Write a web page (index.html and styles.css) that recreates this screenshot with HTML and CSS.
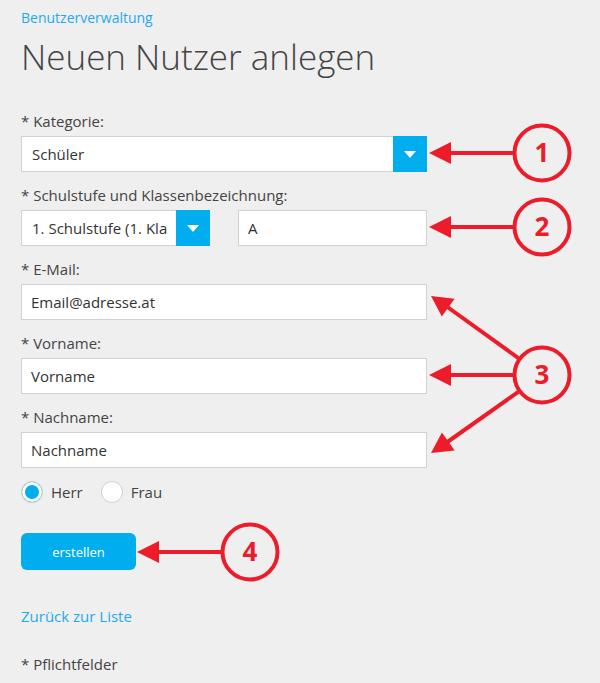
FILE: index.html
```html
<!DOCTYPE html>
<html lang="de">
  <head>
    <meta charset="UTF-8" />
    <title>Neuen Nutzer anlegen</title>
    <link rel="stylesheet" href="styles.css">
  </head>
  <body>
    <div id="page">
      <a class="crumb" href="#">Benutzerverwaltung</a>
      <h1>Neuen Nutzer anlegen</h1>

      <form class="user-form">
        <label>* Kategorie:</label>
        <div class="select">
          <span class="select-text">Schüler</span>
          <span class="select-btn"></span>
        </div>

        <label>* Schulstufe und Klassenbezeichnung:</label>
        <div class="row">
          <div class="select half">
            <span class="select-text">1. Schulstufe (1. Klasse)</span>
            <span class="select-btn"></span>
          </div>
          <input type="text" class="half" value="A" />
        </div>

        <label>* E-Mail:</label>
        <input type="text" value="Email@adresse.at" />

        <label>* Vorname:</label>
        <input type="text" value="Vorname" />

        <label>* Nachname:</label>
        <input type="text" value="Nachname" />

        <div class="radios">
          <span class="radio checked"></span><span class="radio-label">Herr</span>
          <span class="radio"></span><span class="radio-label">Frau</span>
        </div>

        <button type="button" class="btn">erstellen</button>
      </form>

      <a class="back" href="#">Zurück zur Liste</a>
      <p class="note">* Pflichtfelder</p>
    </div>

    <!-- annotations drawn over the screenshot -->
    <svg id="marks" width="600" height="683" viewBox="0 0 600 683">
      <g class="ring">
        <circle cx="542" cy="153" r="27.5" />
        <circle cx="542" cy="227" r="27.5" />
        <circle cx="542" cy="375" r="27.5" />
        <circle cx="250" cy="552" r="27.5" />
      </g>
      <g class="shaft">
        <line x1="514" y1="153" x2="446" y2="153" />
        <line x1="514" y1="227" x2="446" y2="227" />
        <line x1="514" y1="375" x2="446" y2="375" />
        <line x1="518.4" y1="358.1" x2="446" y2="306" />
        <line x1="518.3" y1="391.8" x2="446" y2="443" />
        <line x1="222" y1="552" x2="154" y2="552" />
      </g>
      <g class="head">
        <polygon points="429,153 451,142 451,164" />
        <polygon points="429,227 451,216 451,238" />
        <polygon points="429,375 451,364 451,386" />
        <polygon points="431,296 454.6,298.8 441.8,316.6" />
        <polygon points="431,453 441.9,432.4 454.7,450.4" />
        <polygon points="137,552 159,541 159,563" />
      </g>
      <g class="num">
        <text x="542" y="162">1</text>
        <text x="542" y="236">2</text>
        <text x="542" y="384">3</text>
        <text x="250" y="561">4</text>
      </g>
    </svg>
  </body>
</html>
```

FILE: styles.css
```css
* {
  box-sizing: border-box;
}
body {
  margin: 0;
  background-color: #efefef;
  font-family: "Open Sans", "DejaVu Sans", sans-serif;
  font-size: 15px;
  color: #444;
  position: relative;
}
#page {
  padding: 8px 0 0 21px;
  width: 427px;
}
a {
  color: #1eaaf1;
  text-decoration: none;
}
.crumb {
  display: block;
  line-height: 20px;
  font-size: 14px;
}
h1 {
  font-size: 35px;
  font-weight: 300;
  line-height: 48px;
  margin: 5px 0 30px;
  color: #444;
}
.user-form label {
  display: block;
  line-height: 20px;
  margin-bottom: 5px;
}
.user-form input,
.select {
  display: block;
  width: 406px;
  height: 36px;
  border: 1px solid #d2d2d2;
  background: white;
  font-family: "Open Sans", "DejaVu Sans", sans-serif;
  font-size: 15px;
  color: #333;
  padding: 0 9px;
  margin: 0 0 13px;
  outline: none;
}
.select {
  display: flex;
  align-items: center;
  padding: 0 0 0 10px;
}
.select-text {
  flex: 1;
  white-space: nowrap;
  overflow: hidden;
  margin-right: 8px;
}
.select-btn {
  width: 34px;
  height: 36px;
  margin: -1px -1px -1px 0;
  background: #00aeef;
  display: flex;
  align-items: center;
  justify-content: center;
}
.select-btn::after {
  content: "";
  border-left: 6px solid transparent;
  border-right: 6px solid transparent;
  border-top: 7px solid white;
}
.row {
  display: flex;
  justify-content: space-between;
  width: 406px;
}
.user-form .half {
  width: 189px;
}
.radios {
  display: flex;
  align-items: center;
  height: 22px;
  margin: 1px 0 30px;
}
.radio {
  width: 22px;
  height: 22px;
  border-radius: 50%;
  border: 1px solid #d0d0d0;
  background: white;
}
.radio.checked {
  background: #00aeef;
  box-shadow: inset 0 0 0 3px white;
}
.radio-label {
  margin: 0 18px 0 8px;
}
.btn {
  width: 115px;
  height: 37px;
  border: none;
  border-radius: 6px;
  background: #00aeef;
  color: white;
  font-family: "Open Sans", "DejaVu Sans", sans-serif;
  font-size: 13px;
}
.back {
  display: block;
  line-height: 20px;
  margin-top: 36px;
}
.note {
  margin: 28px 0 0;
  line-height: 20px;
}

#marks {
  position: absolute;
  top: 0;
  left: 0;
  pointer-events: none;
}
.ring circle {
  fill: none;
  stroke: #ec1c2a;
  stroke-width: 4;
}
.shaft line {
  stroke: #ec1c2a;
  stroke-width: 4;
}
.head polygon {
  fill: #ec1c2a;
}
.num text {
  fill: #ec1c2a;
  font-family: "Open Sans", "DejaVu Sans", sans-serif;
  font-weight: 700;
  font-size: 26px;
  text-anchor: middle;
}
```
